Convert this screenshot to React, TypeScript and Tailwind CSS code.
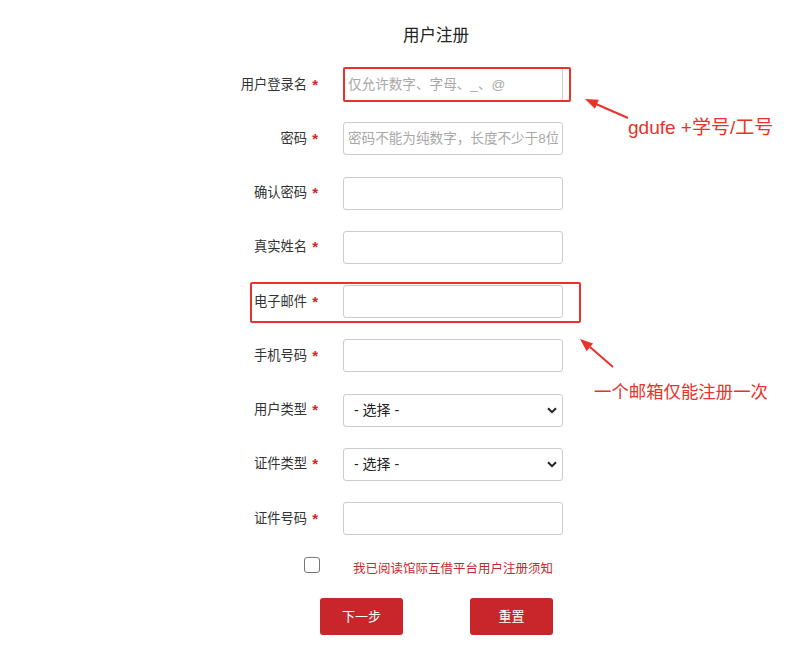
import React from 'react';

const rows: { label: string; kind: 'input' | 'select'; placeholder?: string }[] = [
  { label: '用户登录名', kind: 'input', placeholder: '仅允许数字、字母、_、@' },
  { label: '密码', kind: 'input', placeholder: '密码不能为纯数字，长度不少于8位' },
  { label: '确认密码', kind: 'input' },
  { label: '真实姓名', kind: 'input' },
  { label: '电子邮件', kind: 'input' },
  { label: '手机号码', kind: 'input' },
  { label: '用户类型', kind: 'select' },
  { label: '证件类型', kind: 'select' },
  { label: '证件号码', kind: 'input' },
];

function Chevron() {
  return (
    <svg width="10" height="7" viewBox="0 0 10 7" className="absolute right-[6px] top-[13px] pointer-events-none">
      <path d="M1 1.2 L5 5.2 L9 1.2" fill="none" stroke="#222" strokeWidth="2" />
    </svg>
  );
}

export default function App() {
  return (
    <div className="relative w-[799px] h-[663px] bg-white text-[#333] font-['Liberation_Sans','Noto_Sans_CJK_SC',sans-serif] overflow-hidden">
      {/* 标题 */}
      <div className="ml-[300px] w-[272px] pt-[25px] text-center text-[16.5px] leading-[20px] text-[#222]">用户注册</div>

      {/* 表单 */}
      <div className="ml-[200px] mt-[23px] flex flex-col gap-y-[21.25px]">
        {rows.map((r) => (
          <div key={r.label} className="flex items-center h-[33px]">
            <div className="w-[120px] flex justify-end items-center pr-[2px]">
              <span className="text-[13.3px] leading-[16px] text-[#333]">{r.label}</span>
              <span className="ml-[5px] text-[15px] leading-[16px] font-bold text-[#d0262b]">*</span>
            </div>
            {r.kind === 'input' ? (
              <input
                className="ml-[23px] w-[220px] h-[33px] border border-[#cccccc] rounded-[3px] px-[4px] text-[13.6px] outline-none placeholder-[#a8a8a8]"
                placeholder={r.placeholder}
              />
            ) : (
              <div className="relative ml-[23px] w-[220px] h-[33px]">
                <select className="appearance-none w-full h-full border border-[#cccccc] rounded-[3px] pl-[10px] text-[14px] text-[#222] bg-white outline-none">
                  <option>- 选择 -</option>
                </select>
                <Chevron />
              </div>
            )}
          </div>
        ))}
      </div>

      {/* 阅读须知 */}
      <div className="ml-[304px] mt-[22px] flex items-start h-[17px]">
        <div className="w-[16px] h-[16px] border border-[#767676] rounded-[3px] bg-white" />
        <span className="ml-[33px] mt-[4px] text-[12.5px] leading-[16px] text-[#c8282d]">我已阅读馆际互借平台用户注册须知</span>
      </div>

      {/* 按钮 */}
      <div className="ml-[320px] mt-[24px] flex gap-[67px]">
        <button className="w-[83px] h-[37px] rounded-[3px] bg-[#c8262b] text-white text-[13px]">下一步</button>
        <button className="w-[83px] h-[37px] rounded-[3px] bg-[#c8262b] text-white text-[13px]">重置</button>
      </div>

      {/* 标注 */}
      <div className="absolute left-[343px] top-[67px] w-[228px] h-[35px] border-2 border-[#e8322b] rounded-[2px] pointer-events-none" />
      <div className="absolute left-[250px] top-[282px] w-[331px] h-[41px] border-2 border-[#e8322b] rounded-[2px] pointer-events-none" />
      <svg className="absolute left-0 top-0 pointer-events-none" width="799" height="663">
        <line x1="628" y1="118" x2="596" y2="104" stroke="#e8322b" strokeWidth="2" />
        <polygon points="585,99 598.9,99.7 594.9,108.8" fill="#e8322b" />
        <line x1="613" y1="367" x2="590" y2="347" stroke="#e8322b" strokeWidth="2" />
        <polygon points="580,339 593.1,343.6 586.7,351.2" fill="#e8322b" />
      </svg>
      <div className="absolute left-[628px] top-[116px] text-[19px] leading-[24px] text-[#e8322b]">gdufe +学号/工号</div>
      <div className="absolute left-[594px] top-[380px] text-[17.4px] leading-[24px] text-[#e8322b]">一个邮箱仅能注册一次</div>
    </div>
  );
}
